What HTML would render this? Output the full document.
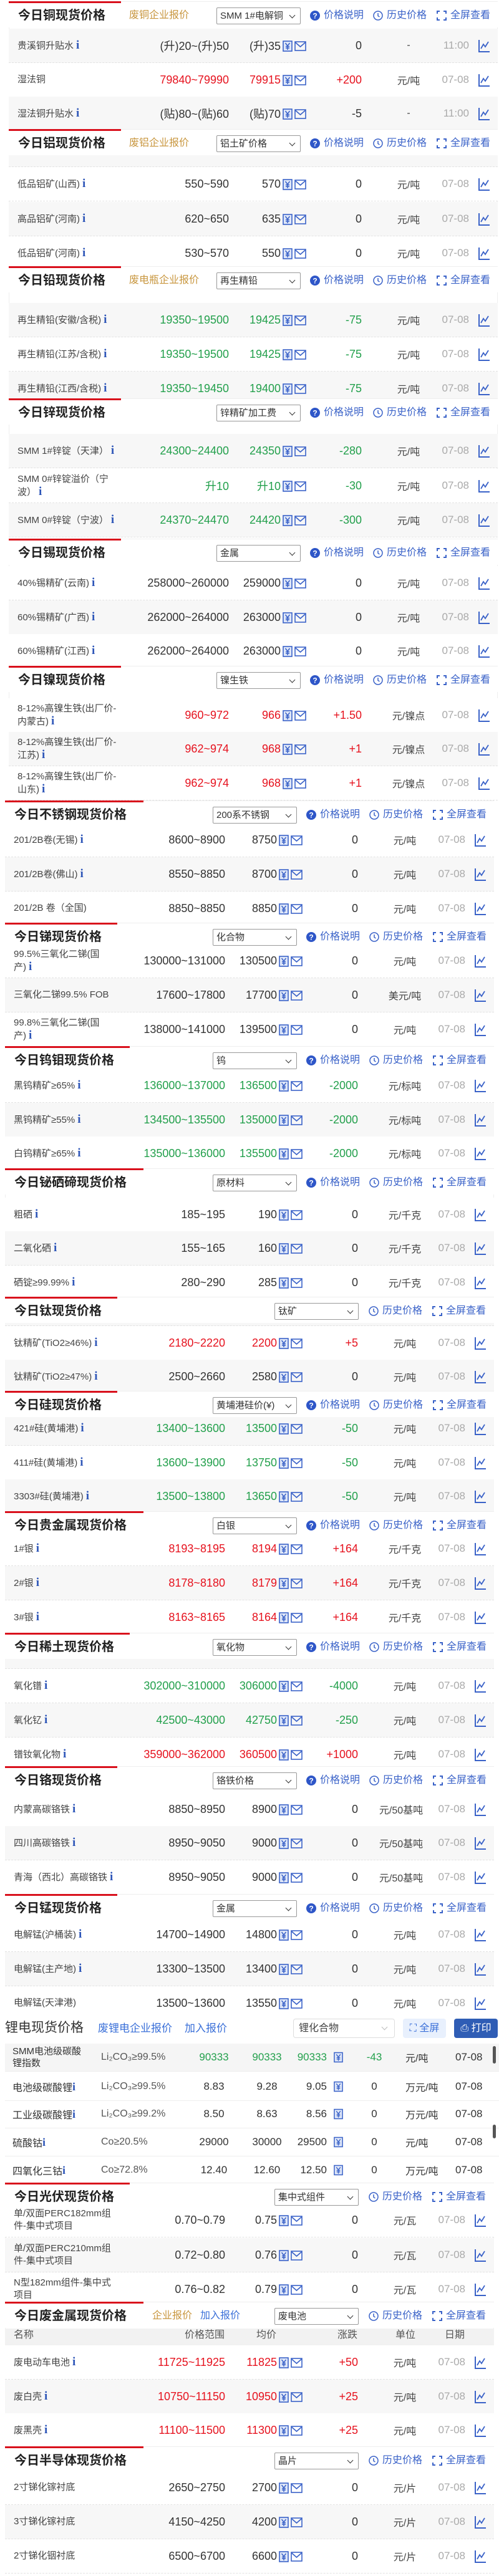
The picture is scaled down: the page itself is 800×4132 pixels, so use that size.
<!DOCTYPE html>
<html><head><meta charset="utf-8">
<style>
*{margin:0;padding:0;box-sizing:border-box}
body{width:800px;height:4132px;position:relative;background:#fff;font-family:"Liberation Sans","Noto Sans CJK SC",sans-serif;color:#333;overflow:hidden}
.sec{position:absolute;left:0;width:798px;overflow:hidden;background:#fff}
.sec.s{left:-6px}
.box{position:absolute;left:14px;right:0;top:0;bottom:4px;border:1px solid #eee;border-top:none}
.bar{position:absolute;left:14px;top:0;width:180px;height:3px;background:#d9101c;z-index:3}
.hd{position:absolute;left:14px;right:0;top:0;height:42px;background:#fff;z-index:2;border-top:1px solid #eee}
.tt{position:absolute;left:29px;top:10px;font-size:20px;font-weight:bold;line-height:26px;color:#222;z-index:3}
.sub{position:absolute;top:13px;font-size:16px;line-height:20px;color:#c8963e;z-index:3}
.sub.b{color:#3a6fd8}
.sel{position:absolute;left:347px;top:10px;width:135px;height:27px;border:1px solid #999;border-radius:2px;font-size:15px;line-height:25px;padding-left:5px;z-index:3;background:#fff;white-space:nowrap;overflow:hidden}
.sel:after{content:"";position:absolute;right:9px;top:8px;width:6px;height:6px;border-right:1.5px solid #333;border-bottom:1.5px solid #333;transform:rotate(45deg)}
.lk{position:absolute;top:13px;font-size:16px;line-height:20px;color:#3a62c8;z-index:3;white-space:nowrap}
.lk svg{position:absolute;left:-22px;top:2px}
.row{position:absolute;left:14px;right:0;height:55px;border-bottom:1px dashed #e2e2e2;background:#fff}
.row.g{background:#f7f7f7}
.row>div{position:absolute;top:0;height:54px;display:flex;align-items:center}
.n{left:14px;width:165px;font-size:15px;line-height:20px;color:#444;display:block!important;padding-top:0}
.n{display:flex!important;align-items:center}
.n span{display:block}
.n i{font-family:"Liberation Serif",serif;font-weight:bold;font-style:normal;color:#2e56b8;font-size:19px;margin-left:4px}
.r{left:186px;width:167px;justify-content:flex-end;font-size:18px}
.a{left:356px;width:80px;justify-content:flex-end;font-size:18px}
.c{left:486px;width:80px;justify-content:flex-end;font-size:18px}
.u{left:596px;width:90px;justify-content:center;font-size:16px;color:#444}
.d{left:686px;width:52px;justify-content:flex-end;font-size:17px;color:#aaa}
.row svg{position:absolute}
.yi{left:439px;top:19px}.ml{left:458px;top:19px}.ch{left:752px;top:17px}
.rd{color:#e6121e}.gr{color:#23a04c}
.li{position:absolute;left:0;top:3230px;width:800px;height:271px;overflow:hidden;background:#fff}
.lr{position:absolute;left:8px;right:0;height:45px;border-bottom:1px solid #eee}
.lr>div{position:absolute;top:0;height:44px;display:flex;align-items:center}
</style></head><body>
<svg width="0" height="0" style="position:absolute">
<defs>
<symbol id="yen" viewBox="0 0 16 18"><rect x="1" y="1" width="14" height="16" fill="#dfe7f8" stroke="#3a62c8" stroke-width="1.6"/><path d="M4.5 4 8 8.5 11.5 4M8 8.5V15M5 9.5h6M5 12h6" stroke="#3a62c8" stroke-width="1.5" fill="none"/></symbol>
<symbol id="env" viewBox="0 0 19 18"><rect x="1" y="2" width="17" height="14" fill="none" stroke="#3a62c8" stroke-width="1.6"/><path d="M1.5 3 9.5 10 17.5 3" fill="none" stroke="#3a62c8" stroke-width="1.6"/></symbol>
<symbol id="cht" viewBox="0 0 20 22"><path d="M2 1V20H19" fill="none" stroke="#3a62c8" stroke-width="2"/><path d="M5 15 9 8 12 12 17 4" fill="none" stroke="#3a62c8" stroke-width="1.8"/></symbol>
<symbol id="hlp" viewBox="0 0 16 16"><circle cx="8" cy="8" r="8" fill="#2e56c8"/><text x="8" y="12.5" font-size="12" font-weight="bold" text-anchor="middle" fill="#fff" font-family="Liberation Sans">?</text></symbol>
<symbol id="clk" viewBox="0 0 16 16"><circle cx="8" cy="8" r="7" fill="none" stroke="#3a62c8" stroke-width="1.5"/><path d="M8 4V8.5L10.5 10" fill="none" stroke="#3a62c8" stroke-width="1.5"/></symbol>
<symbol id="ful" viewBox="0 0 16 16"><path d="M1 5V1H5M11 1H15V5M15 11V15H11M5 15H1V11" fill="none" stroke="#3a62c8" stroke-width="2"/></symbol>
</defs></svg>

<!-- COPPER -->
<div class="sec" style="top:2px;height:205px"><div class="box"></div><div class="bar"></div><div class="hd"></div>
<div class="tt">今日铜现货价格</div><div class="sub" style="left:207px">废铜企业报价</div>
<div class="sel">SMM 1#电解铜</div>
<div class="lk" style="left:519px"><svg width="16" height="16"><use href="#hlp"/></svg>价格说明</div>
<div class="lk" style="left:620px"><svg width="16" height="16"><use href="#clk"/></svg>历史价格</div>
<div class="lk" style="left:722px"><svg width="16" height="16"><use href="#ful"/></svg>全屏查看</div>
<div class="row g" style="top:44px"><div class="n"><span>贵溪铜升贴水<i>i</i></span></div><div class="r">(升)20~(升)50</div><div class="a">(升)35</div><svg class="yi" width="16" height="18"><use href="#yen"/></svg><svg class="ml" width="19" height="18"><use href="#env"/></svg><div class="c">0</div><div class="u">-</div><div class="d">11:00</div><svg class="ch" width="20" height="22"><use href="#cht"/></svg></div>
<div class="row" style="top:99px"><div class="n"><span>湿法铜</span></div><div class="r rd">79840~79990</div><div class="a rd">79915</div><svg class="yi" width="16" height="18"><use href="#yen"/></svg><svg class="ml" width="19" height="18"><use href="#env"/></svg><div class="c rd">+200</div><div class="u">元/吨</div><div class="d">07-08</div><svg class="ch" width="20" height="22"><use href="#cht"/></svg></div>
<div class="row g" style="top:153px"><div class="n"><span>湿法铜升贴水<i>i</i></span></div><div class="r">(贴)80~(贴)60</div><div class="a">(贴)70</div><svg class="yi" width="16" height="18"><use href="#yen"/></svg><svg class="ml" width="19" height="18"><use href="#env"/></svg><div class="c">-5</div><div class="u">-</div><div class="d">11:00</div><svg class="ch" width="20" height="22"><use href="#cht"/></svg></div>
</div>

<!-- ALUMINIUM -->
<div class="sec" style="top:207px;height:220px"><div class="box"></div><div class="bar"></div><div class="hd"></div>
<div class="tt">今日铝现货价格</div><div class="sub" style="left:207px">废铝企业报价</div>
<div class="sel">铝土矿价格</div>
<div class="lk" style="left:519px"><svg width="16" height="16"><use href="#hlp"/></svg>价格说明</div>
<div class="lk" style="left:620px"><svg width="16" height="16"><use href="#clk"/></svg>历史价格</div>
<div class="lk" style="left:722px"><svg width="16" height="16"><use href="#ful"/></svg>全屏查看</div>
<div class="row g" style="top:6px"></div>
<div class="row" style="top:61px"><div class="n"><span>低品铝矿(山西)<i>i</i></span></div><div class="r">550~590</div><div class="a">570</div><svg class="yi" width="16" height="18"><use href="#yen"/></svg><svg class="ml" width="19" height="18"><use href="#env"/></svg><div class="c">0</div><div class="u">元/吨</div><div class="d">07-08</div><svg class="ch" width="20" height="22"><use href="#cht"/></svg></div>
<div class="row g" style="top:117px"><div class="n"><span>高品铝矿(河南)<i>i</i></span></div><div class="r">620~650</div><div class="a">635</div><svg class="yi" width="16" height="18"><use href="#yen"/></svg><svg class="ml" width="19" height="18"><use href="#env"/></svg><div class="c">0</div><div class="u">元/吨</div><div class="d">07-08</div><svg class="ch" width="20" height="22"><use href="#cht"/></svg></div>
<div class="row" style="top:172px"><div class="n"><span>低品铝矿(河南)<i>i</i></span></div><div class="r">530~570</div><div class="a">550</div><svg class="yi" width="16" height="18"><use href="#yen"/></svg><svg class="ml" width="19" height="18"><use href="#env"/></svg><div class="c">0</div><div class="u">元/吨</div><div class="d">07-08</div><svg class="ch" width="20" height="22"><use href="#cht"/></svg></div>
</div>

<!-- LEAD -->
<div class="sec" style="top:427px;height:212px"><div class="box"></div><div class="bar"></div><div class="hd"></div>
<div class="tt">今日铅现货价格</div><div class="sub" style="left:207px">废电瓶企业报价</div>
<div class="sel">再生精铅</div>
<div class="lk" style="left:519px"><svg width="16" height="16"><use href="#hlp"/></svg>价格说明</div>
<div class="lk" style="left:620px"><svg width="16" height="16"><use href="#clk"/></svg>历史价格</div>
<div class="lk" style="left:722px"><svg width="16" height="16"><use href="#ful"/></svg>全屏查看</div>
<div class="row g" style="top:59px"><div class="n"><span>再生精铅(安徽/含税)<i>i</i></span></div><div class="r gr">19350~19500</div><div class="a gr">19425</div><svg class="yi" width="16" height="18"><use href="#yen"/></svg><svg class="ml" width="19" height="18"><use href="#env"/></svg><div class="c gr">-75</div><div class="u">元/吨</div><div class="d">07-08</div><svg class="ch" width="20" height="22"><use href="#cht"/></svg></div>
<div class="row" style="top:114px"><div class="n"><span>再生精铅(江苏/含税)<i>i</i></span></div><div class="r gr">19350~19500</div><div class="a gr">19425</div><svg class="yi" width="16" height="18"><use href="#yen"/></svg><svg class="ml" width="19" height="18"><use href="#env"/></svg><div class="c gr">-75</div><div class="u">元/吨</div><div class="d">07-08</div><svg class="ch" width="20" height="22"><use href="#cht"/></svg></div>
<div class="row g" style="top:169px"><div class="n"><span>再生精铅(江西/含税)<i>i</i></span></div><div class="r gr">19350~19450</div><div class="a gr">19400</div><svg class="yi" width="16" height="18"><use href="#yen"/></svg><svg class="ml" width="19" height="18"><use href="#env"/></svg><div class="c gr">-75</div><div class="u">元/吨</div><div class="d">07-08</div><svg class="ch" width="20" height="22"><use href="#cht"/></svg></div>
</div>

<!-- ZINC -->
<div class="sec" style="top:639px;height:225px"><div class="box"></div><div class="bar"></div><div class="hd"></div>
<div class="tt">今日锌现货价格</div>
<div class="sel">锌精矿加工费</div>
<div class="lk" style="left:519px"><svg width="16" height="16"><use href="#hlp"/></svg>价格说明</div>
<div class="lk" style="left:620px"><svg width="16" height="16"><use href="#clk"/></svg>历史价格</div>
<div class="lk" style="left:722px"><svg width="16" height="16"><use href="#ful"/></svg>全屏查看</div>
<div class="row g" style="top:57px"><div class="n"><span>SMM 1#锌锭（天津）<i>i</i></span></div><div class="r gr">24300~24400</div><div class="a gr">24350</div><svg class="yi" width="16" height="18"><use href="#yen"/></svg><svg class="ml" width="19" height="18"><use href="#env"/></svg><div class="c gr">-280</div><div class="u">元/吨</div><div class="d">07-08</div><svg class="ch" width="20" height="22"><use href="#cht"/></svg></div>
<div class="row" style="top:113px"><div class="n"><span>SMM 0#锌锭溢价（宁波）<i>i</i></span></div><div class="r gr">升10</div><div class="a gr">升10</div><svg class="yi" width="16" height="18"><use href="#yen"/></svg><svg class="ml" width="19" height="18"><use href="#env"/></svg><div class="c gr">-30</div><div class="u">元/吨</div><div class="d">07-08</div><svg class="ch" width="20" height="22"><use href="#cht"/></svg></div>
<div class="row g" style="top:168px"><div class="n"><span>SMM 0#锌锭（宁波）<i>i</i></span></div><div class="r gr">24370~24470</div><div class="a gr">24420</div><svg class="yi" width="16" height="18"><use href="#yen"/></svg><svg class="ml" width="19" height="18"><use href="#env"/></svg><div class="c gr">-300</div><div class="u">元/吨</div><div class="d">07-08</div><svg class="ch" width="20" height="22"><use href="#cht"/></svg></div>
</div>

<!-- TIN -->
<div class="sec" style="top:864px;height:204px"><div class="box"></div><div class="bar"></div><div class="hd"></div>
<div class="tt">今日锡现货价格</div>
<div class="sel">金属</div>
<div class="lk" style="left:519px"><svg width="16" height="16"><use href="#hlp"/></svg>价格说明</div>
<div class="lk" style="left:620px"><svg width="16" height="16"><use href="#clk"/></svg>历史价格</div>
<div class="lk" style="left:722px"><svg width="16" height="16"><use href="#ful"/></svg>全屏查看</div>
<div class="row" style="top:44px"><div class="n"><span>40%锡精矿(云南)<i>i</i></span></div><div class="r">258000~260000</div><div class="a">259000</div><svg class="yi" width="16" height="18"><use href="#yen"/></svg><svg class="ml" width="19" height="18"><use href="#env"/></svg><div class="c">0</div><div class="u">元/吨</div><div class="d">07-08</div><svg class="ch" width="20" height="22"><use href="#cht"/></svg></div>
<div class="row g" style="top:99px"><div class="n"><span>60%锡精矿(广西)<i>i</i></span></div><div class="r">262000~264000</div><div class="a">263000</div><svg class="yi" width="16" height="18"><use href="#yen"/></svg><svg class="ml" width="19" height="18"><use href="#env"/></svg><div class="c">0</div><div class="u">元/吨</div><div class="d">07-08</div><svg class="ch" width="20" height="22"><use href="#cht"/></svg></div>
<div class="row" style="top:153px"><div class="n"><span>60%锡精矿(江西)<i>i</i></span></div><div class="r">262000~264000</div><div class="a">263000</div><svg class="yi" width="16" height="18"><use href="#yen"/></svg><svg class="ml" width="19" height="18"><use href="#env"/></svg><div class="c">0</div><div class="u">元/吨</div><div class="d">07-08</div><svg class="ch" width="20" height="22"><use href="#cht"/></svg></div>
</div>

<!-- NICKEL -->
<div class="sec" style="top:1068px;height:216px"><div class="box"></div><div class="bar"></div><div class="hd"></div>
<div class="tt">今日镍现货价格</div>
<div class="sel">镍生铁</div>
<div class="lk" style="left:519px"><svg width="16" height="16"><use href="#hlp"/></svg>价格说明</div>
<div class="lk" style="left:620px"><svg width="16" height="16"><use href="#clk"/></svg>历史价格</div>
<div class="lk" style="left:722px"><svg width="16" height="16"><use href="#ful"/></svg>全屏查看</div>
<div class="row" style="top:52px"><div class="n"><span>8-12%高镍生铁(出厂价-内蒙古)<i>i</i></span></div><div class="r rd">960~972</div><div class="a rd">966</div><svg class="yi" width="16" height="18"><use href="#yen"/></svg><svg class="ml" width="19" height="18"><use href="#env"/></svg><div class="c rd">+1.50</div><div class="u">元/镍点</div><div class="d">07-08</div><svg class="ch" width="20" height="22"><use href="#cht"/></svg></div>
<div class="row g" style="top:106px"><div class="n"><span>8-12%高镍生铁(出厂价-江苏)<i>i</i></span></div><div class="r rd">962~974</div><div class="a rd">968</div><svg class="yi" width="16" height="18"><use href="#yen"/></svg><svg class="ml" width="19" height="18"><use href="#env"/></svg><div class="c rd">+1</div><div class="u">元/镍点</div><div class="d">07-08</div><svg class="ch" width="20" height="22"><use href="#cht"/></svg></div>
<div class="row" style="top:161px"><div class="n"><span>8-12%高镍生铁(出厂价-山东)<i>i</i></span></div><div class="r rd">962~974</div><div class="a rd">968</div><svg class="yi" width="16" height="18"><use href="#yen"/></svg><svg class="ml" width="19" height="18"><use href="#env"/></svg><div class="c rd">+1</div><div class="u">元/镍点</div><div class="d">07-08</div><svg class="ch" width="20" height="22"><use href="#cht"/></svg></div>
</div>

<!-- STAINLESS -->
<div class="sec s" style="top:1284px;height:196px"><div class="box"></div><div class="bar" style="width:222px"></div><div class="hd"></div>
<div class="tt">今日不锈钢现货价格</div>
<div class="sel">200系不锈钢</div>
<div class="lk" style="left:519px"><svg width="16" height="16"><use href="#hlp"/></svg>价格说明</div>
<div class="lk" style="left:620px"><svg width="16" height="16"><use href="#clk"/></svg>历史价格</div>
<div class="lk" style="left:722px"><svg width="16" height="16"><use href="#ful"/></svg>全屏查看</div>
<div class="row" style="top:36px"><div class="n"><span>201/2B卷(无锡)<i>i</i></span></div><div class="r">8600~8900</div><div class="a">8750</div><svg class="yi" width="16" height="18"><use href="#yen"/></svg><svg class="ml" width="19" height="18"><use href="#env"/></svg><div class="c">0</div><div class="u">元/吨</div><div class="d">07-08</div><svg class="ch" width="20" height="22"><use href="#cht"/></svg></div>
<div class="row g" style="top:91px"><div class="n"><span>201/2B卷(佛山)<i>i</i></span></div><div class="r">8550~8850</div><div class="a">8700</div><svg class="yi" width="16" height="18"><use href="#yen"/></svg><svg class="ml" width="19" height="18"><use href="#env"/></svg><div class="c">0</div><div class="u">元/吨</div><div class="d">07-08</div><svg class="ch" width="20" height="22"><use href="#cht"/></svg></div>
<div class="row" style="top:146px"><div class="n"><span>201/2B 卷（全国)</span></div><div class="r">8850~8850</div><div class="a">8850</div><svg class="yi" width="16" height="18"><use href="#yen"/></svg><svg class="ml" width="19" height="18"><use href="#env"/></svg><div class="c">0</div><div class="u">元/吨</div><div class="d">07-08</div><svg class="ch" width="20" height="22"><use href="#cht"/></svg></div>
</div>

<!-- ANTIMONY -->
<div class="sec s" style="top:1480px;height:198px"><div class="box"></div><div class="bar"></div><div class="hd"></div>
<div class="tt">今日锑现货价格</div>
<div class="sel">化合物</div>
<div class="lk" style="left:519px"><svg width="16" height="16"><use href="#hlp"/></svg>价格说明</div>
<div class="lk" style="left:620px"><svg width="16" height="16"><use href="#clk"/></svg>历史价格</div>
<div class="lk" style="left:722px"><svg width="16" height="16"><use href="#ful"/></svg>全屏查看</div>
<div class="row" style="top:34px"><div class="n"><span>99.5%三氧化二锑(国产)<i>i</i></span></div><div class="r">130000~131000</div><div class="a">130500</div><svg class="yi" width="16" height="18"><use href="#yen"/></svg><svg class="ml" width="19" height="18"><use href="#env"/></svg><div class="c">0</div><div class="u">元/吨</div><div class="d">07-08</div><svg class="ch" width="20" height="22"><use href="#cht"/></svg></div>
<div class="row g" style="top:89px"><div class="n"><span>三氧化二锑99.5% FOB</span></div><div class="r">17600~17800</div><div class="a">17700</div><svg class="yi" width="16" height="18"><use href="#yen"/></svg><svg class="ml" width="19" height="18"><use href="#env"/></svg><div class="c">0</div><div class="u">美元/吨</div><div class="d">07-08</div><svg class="ch" width="20" height="22"><use href="#cht"/></svg></div>
<div class="row" style="top:144px"><div class="n"><span>99.8%三氧化二锑(国产)<i>i</i></span></div><div class="r">138000~141000</div><div class="a">139500</div><svg class="yi" width="16" height="18"><use href="#yen"/></svg><svg class="ml" width="19" height="18"><use href="#env"/></svg><div class="c">0</div><div class="u">元/吨</div><div class="d">07-08</div><svg class="ch" width="20" height="22"><use href="#cht"/></svg></div>
</div>

<!-- TUNGSTEN -->
<div class="sec s" style="top:1678px;height:196px"><div class="box"></div><div class="bar" style="width:200px"></div><div class="hd"></div>
<div class="tt">今日钨钼现货价格</div>
<div class="sel">钨</div>
<div class="lk" style="left:519px"><svg width="16" height="16"><use href="#hlp"/></svg>价格说明</div>
<div class="lk" style="left:620px"><svg width="16" height="16"><use href="#clk"/></svg>历史价格</div>
<div class="lk" style="left:722px"><svg width="16" height="16"><use href="#ful"/></svg>全屏查看</div>
<div class="row" style="top:36px"><div class="n"><span>黑钨精矿≥65%<i>i</i></span></div><div class="r gr">136000~137000</div><div class="a gr">136500</div><svg class="yi" width="16" height="18"><use href="#yen"/></svg><svg class="ml" width="19" height="18"><use href="#env"/></svg><div class="c gr">-2000</div><div class="u">元/标吨</div><div class="d">07-08</div><svg class="ch" width="20" height="22"><use href="#cht"/></svg></div>
<div class="row g" style="top:91px"><div class="n"><span>黑钨精矿≥55%<i>i</i></span></div><div class="r gr">134500~135500</div><div class="a gr">135000</div><svg class="yi" width="16" height="18"><use href="#yen"/></svg><svg class="ml" width="19" height="18"><use href="#env"/></svg><div class="c gr">-2000</div><div class="u">元/标吨</div><div class="d">07-08</div><svg class="ch" width="20" height="22"><use href="#cht"/></svg></div>
<div class="row" style="top:145px"><div class="n"><span>白钨精矿≥65%<i>i</i></span></div><div class="r gr">135000~136000</div><div class="a gr">135500</div><svg class="yi" width="16" height="18"><use href="#yen"/></svg><svg class="ml" width="19" height="18"><use href="#env"/></svg><div class="c gr">-2000</div><div class="u">元/标吨</div><div class="d">07-08</div><svg class="ch" width="20" height="22"><use href="#cht"/></svg></div>
</div>

<!-- BISMUTH/SE/TE -->
<div class="sec s" style="top:1874px;height:206px"><div class="box"></div><div class="bar" style="width:222px"></div><div class="hd"></div>
<div class="tt">今日铋硒碲现货价格</div>
<div class="sel">原材料</div>
<div class="lk" style="left:519px"><svg width="16" height="16"><use href="#hlp"/></svg>价格说明</div>
<div class="lk" style="left:620px"><svg width="16" height="16"><use href="#clk"/></svg>历史价格</div>
<div class="lk" style="left:722px"><svg width="16" height="16"><use href="#ful"/></svg>全屏查看</div>
<div class="row" style="top:47px"><div class="n"><span>粗硒<i>i</i></span></div><div class="r">185~195</div><div class="a">190</div><svg class="yi" width="16" height="18"><use href="#yen"/></svg><svg class="ml" width="19" height="18"><use href="#env"/></svg><div class="c">0</div><div class="u">元/千克</div><div class="d">07-08</div><svg class="ch" width="20" height="22"><use href="#cht"/></svg></div>
<div class="row g" style="top:101px"><div class="n"><span>二氧化硒<i>i</i></span></div><div class="r">155~165</div><div class="a">160</div><svg class="yi" width="16" height="18"><use href="#yen"/></svg><svg class="ml" width="19" height="18"><use href="#env"/></svg><div class="c">0</div><div class="u">元/千克</div><div class="d">07-08</div><svg class="ch" width="20" height="22"><use href="#cht"/></svg></div>
<div class="row" style="top:156px"><div class="n"><span>硒锭≥99.99%<i>i</i></span></div><div class="r">280~290</div><div class="a">285</div><svg class="yi" width="16" height="18"><use href="#yen"/></svg><svg class="ml" width="19" height="18"><use href="#env"/></svg><div class="c">0</div><div class="u">元/千克</div><div class="d">07-08</div><svg class="ch" width="20" height="22"><use href="#cht"/></svg></div>
</div>

<!-- TITANIUM -->
<div class="sec s" style="top:2080px;height:151px"><div class="box"></div><div class="bar"></div><div class="hd"></div>
<div class="tt">今日钛现货价格</div>
<div class="sel" style="left:446px">钛矿</div>
<div class="lk" style="left:619px"><svg width="16" height="16"><use href="#clk"/></svg>历史价格</div>
<div class="lk" style="left:721px"><svg width="16" height="16"><use href="#ful"/></svg>全屏查看</div>
<div class="row g" style="top:-8px"></div>
<div class="row" style="top:47px"><div class="n"><span>钛精矿(TiO2≥46%)<i>i</i></span></div><div class="r rd">2180~2220</div><div class="a rd">2200</div><svg class="yi" width="16" height="18"><use href="#yen"/></svg><svg class="ml" width="19" height="18"><use href="#env"/></svg><div class="c rd">+5</div><div class="u">元/吨</div><div class="d">07-08</div><svg class="ch" width="20" height="22"><use href="#cht"/></svg></div>
<div class="row g" style="top:101px"><div class="n"><span>钛精矿(TiO2≥47%)<i>i</i></span></div><div class="r">2500~2660</div><div class="a">2580</div><svg class="yi" width="16" height="18"><use href="#yen"/></svg><svg class="ml" width="19" height="18"><use href="#env"/></svg><div class="c">0</div><div class="u">元/吨</div><div class="d">07-08</div><svg class="ch" width="20" height="22"><use href="#cht"/></svg></div>
</div>

<!-- SILICON -->
<div class="sec s" style="top:2231px;height:193px"><div class="box"></div><div class="bar"></div><div class="hd"></div>
<div class="tt">今日硅现货价格</div>
<div class="sel">黄埔港硅价(¥)</div>
<div class="lk" style="left:519px"><svg width="16" height="16"><use href="#hlp"/></svg>价格说明</div>
<div class="lk" style="left:620px"><svg width="16" height="16"><use href="#clk"/></svg>历史价格</div>
<div class="lk" style="left:722px"><svg width="16" height="16"><use href="#ful"/></svg>全屏查看</div>
<div class="row g" style="top:33px"><div class="n"><span>421#硅(黄埔港)<i>i</i></span></div><div class="r gr">13400~13600</div><div class="a gr">13500</div><svg class="yi" width="16" height="18"><use href="#yen"/></svg><svg class="ml" width="19" height="18"><use href="#env"/></svg><div class="c gr">-50</div><div class="u">元/吨</div><div class="d">07-08</div><svg class="ch" width="20" height="22"><use href="#cht"/></svg></div>
<div class="row" style="top:88px"><div class="n"><span>411#硅(黄埔港)<i>i</i></span></div><div class="r gr">13600~13900</div><div class="a gr">13750</div><svg class="yi" width="16" height="18"><use href="#yen"/></svg><svg class="ml" width="19" height="18"><use href="#env"/></svg><div class="c gr">-50</div><div class="u">元/吨</div><div class="d">07-08</div><svg class="ch" width="20" height="22"><use href="#cht"/></svg></div>
<div class="row g" style="top:142px"><div class="n"><span>3303#硅(黄埔港)<i>i</i></span></div><div class="r gr">13500~13800</div><div class="a gr">13650</div><svg class="yi" width="16" height="18"><use href="#yen"/></svg><svg class="ml" width="19" height="18"><use href="#env"/></svg><div class="c gr">-50</div><div class="u">元/吨</div><div class="d">07-08</div><svg class="ch" width="20" height="22"><use href="#cht"/></svg></div>
</div>

<!-- PRECIOUS -->
<div class="sec s" style="top:2424px;height:195px"><div class="box"></div><div class="bar" style="width:222px"></div><div class="hd"></div>
<div class="tt">今日贵金属现货价格</div>
<div class="sel">白银</div>
<div class="lk" style="left:519px"><svg width="16" height="16"><use href="#hlp"/></svg>价格说明</div>
<div class="lk" style="left:620px"><svg width="16" height="16"><use href="#clk"/></svg>历史价格</div>
<div class="lk" style="left:722px"><svg width="16" height="16"><use href="#ful"/></svg>全屏查看</div>
<div class="row" style="top:33px"><div class="n"><span>1#银<i>i</i></span></div><div class="r rd">8193~8195</div><div class="a rd">8194</div><svg class="yi" width="16" height="18"><use href="#yen"/></svg><svg class="ml" width="19" height="18"><use href="#env"/></svg><div class="c rd">+164</div><div class="u">元/千克</div><div class="d">07-08</div><svg class="ch" width="20" height="22"><use href="#cht"/></svg></div>
<div class="row g" style="top:88px"><div class="n"><span>2#银<i>i</i></span></div><div class="r rd">8178~8180</div><div class="a rd">8179</div><svg class="yi" width="16" height="18"><use href="#yen"/></svg><svg class="ml" width="19" height="18"><use href="#env"/></svg><div class="c rd">+164</div><div class="u">元/千克</div><div class="d">07-08</div><svg class="ch" width="20" height="22"><use href="#cht"/></svg></div>
<div class="row" style="top:143px"><div class="n"><span>3#银<i>i</i></span></div><div class="r rd">8163~8165</div><div class="a rd">8164</div><svg class="yi" width="16" height="18"><use href="#yen"/></svg><svg class="ml" width="19" height="18"><use href="#env"/></svg><div class="c rd">+164</div><div class="u">元/千克</div><div class="d">07-08</div><svg class="ch" width="20" height="22"><use href="#cht"/></svg></div>
</div>

<!-- RARE EARTH -->
<div class="sec s" style="top:2619px;height:214px"><div class="box"></div><div class="bar" style="width:200px"></div><div class="hd"></div>
<div class="tt">今日稀土现货价格</div>
<div class="sel">氧化物</div>
<div class="lk" style="left:519px"><svg width="16" height="16"><use href="#hlp"/></svg>价格说明</div>
<div class="lk" style="left:620px"><svg width="16" height="16"><use href="#clk"/></svg>历史价格</div>
<div class="lk" style="left:722px"><svg width="16" height="16"><use href="#ful"/></svg>全屏查看</div>
<div class="row g" style="top:3px"></div>
<div class="row" style="top:58px"><div class="n"><span>氧化镨<i>i</i></span></div><div class="r gr">302000~310000</div><div class="a gr">306000</div><svg class="yi" width="16" height="18"><use href="#yen"/></svg><svg class="ml" width="19" height="18"><use href="#env"/></svg><div class="c gr">-4000</div><div class="u">元/吨</div><div class="d">07-08</div><svg class="ch" width="20" height="22"><use href="#cht"/></svg></div>
<div class="row g" style="top:113px"><div class="n"><span>氧化钇<i>i</i></span></div><div class="r gr">42500~43000</div><div class="a gr">42750</div><svg class="yi" width="16" height="18"><use href="#yen"/></svg><svg class="ml" width="19" height="18"><use href="#env"/></svg><div class="c gr">-250</div><div class="u">元/吨</div><div class="d">07-08</div><svg class="ch" width="20" height="22"><use href="#cht"/></svg></div>
<div class="row" style="top:168px"><div class="n"><span>镨钕氧化物<i>i</i></span></div><div class="r rd">359000~362000</div><div class="a rd">360500</div><svg class="yi" width="16" height="18"><use href="#yen"/></svg><svg class="ml" width="19" height="18"><use href="#env"/></svg><div class="c rd">+1000</div><div class="u">元/吨</div><div class="d">07-08</div><svg class="ch" width="20" height="22"><use href="#cht"/></svg></div>
</div>

<!-- CHROME -->
<div class="sec s" style="top:2833px;height:205px"><div class="box"></div><div class="bar"></div><div class="hd"></div>
<div class="tt">今日铬现货价格</div>
<div class="sel">铬铁价格</div>
<div class="lk" style="left:519px"><svg width="16" height="16"><use href="#hlp"/></svg>价格说明</div>
<div class="lk" style="left:620px"><svg width="16" height="16"><use href="#clk"/></svg>历史价格</div>
<div class="lk" style="left:722px"><svg width="16" height="16"><use href="#ful"/></svg>全屏查看</div>
<div class="row" style="top:42px"><div class="n"><span>内蒙高碳铬铁<i>i</i></span></div><div class="r">8850~8950</div><div class="a">8900</div><svg class="yi" width="16" height="18"><use href="#yen"/></svg><svg class="ml" width="19" height="18"><use href="#env"/></svg><div class="c">0</div><div class="u" style="left:590px">元/50基吨</div><div class="d">07-08</div><svg class="ch" width="20" height="22"><use href="#cht"/></svg></div>
<div class="row g" style="top:96px"><div class="n"><span>四川高碳铬铁<i>i</i></span></div><div class="r">8950~9050</div><div class="a">9000</div><svg class="yi" width="16" height="18"><use href="#yen"/></svg><svg class="ml" width="19" height="18"><use href="#env"/></svg><div class="c">0</div><div class="u" style="left:590px">元/50基吨</div><div class="d">07-08</div><svg class="ch" width="20" height="22"><use href="#cht"/></svg></div>
<div class="row" style="top:151px"><div class="n"><span>青海（西北）高碳铬铁<i>i</i></span></div><div class="r">8950~9050</div><div class="a">9000</div><svg class="yi" width="16" height="18"><use href="#yen"/></svg><svg class="ml" width="19" height="18"><use href="#env"/></svg><div class="c">0</div><div class="u" style="left:590px">元/50基吨</div><div class="d">07-08</div><svg class="ch" width="20" height="22"><use href="#cht"/></svg></div>
</div>

<!-- MANGANESE -->
<div class="sec s" style="top:3038px;height:192px"><div class="box"></div><div class="bar"></div><div class="hd"></div>
<div class="tt">今日锰现货价格</div>
<div class="sel">金属</div>
<div class="lk" style="left:519px"><svg width="16" height="16"><use href="#hlp"/></svg>价格说明</div>
<div class="lk" style="left:620px"><svg width="16" height="16"><use href="#clk"/></svg>历史价格</div>
<div class="lk" style="left:722px"><svg width="16" height="16"><use href="#ful"/></svg>全屏查看</div>
<div class="row" style="top:38px"><div class="n"><span>电解锰(沪桶装)<i>i</i></span></div><div class="r">14700~14900</div><div class="a">14800</div><svg class="yi" width="16" height="18"><use href="#yen"/></svg><svg class="ml" width="19" height="18"><use href="#env"/></svg><div class="c">0</div><div class="u">元/吨</div><div class="d">07-08</div><svg class="ch" width="20" height="22"><use href="#cht"/></svg></div>
<div class="row g" style="top:93px"><div class="n"><span>电解锰(主产地)<i>i</i></span></div><div class="r">13300~13500</div><div class="a">13400</div><svg class="yi" width="16" height="18"><use href="#yen"/></svg><svg class="ml" width="19" height="18"><use href="#env"/></svg><div class="c">0</div><div class="u">元/吨</div><div class="d">07-08</div><svg class="ch" width="20" height="22"><use href="#cht"/></svg></div>
<div class="row" style="top:148px"><div class="n"><span>电解锰(天津港)</span></div><div class="r">13500~13600</div><div class="a">13550</div><svg class="yi" width="16" height="18"><use href="#yen"/></svg><svg class="ml" width="19" height="18"><use href="#env"/></svg><div class="c">0</div><div class="u">元/吨</div><div class="d">07-08</div><svg class="ch" width="20" height="22"><use href="#cht"/></svg></div>
</div>

<!-- LITHIUM -->
<div class="li">
<div style="position:absolute;left:8px;top:9px;font-size:21px;line-height:28px;color:#333">锂电现货价格</div>
<div style="position:absolute;left:157px;top:13px;font-size:17px;line-height:22px;color:#3a6fd8">废锂电企业报价</div>
<div style="position:absolute;left:296px;top:13px;font-size:17px;line-height:22px;color:#3a6fd8">加入报价</div>
<div style="position:absolute;left:470px;top:8px;width:163px;height:31px;border:1px solid #ddd;border-radius:4px;font-size:16px;line-height:29px;padding-left:8px;color:#444">锂化合物<span style="position:absolute;right:12px;top:9px;width:7px;height:7px;border-right:1px solid #bbb;border-bottom:1px solid #bbb;transform:rotate(45deg)"></span></div>
<div style="position:absolute;left:646px;top:8px;width:69px;height:31px;border-radius:4px;background:#e8f0fd;color:#3a6fd8;font-size:16px;line-height:31px;text-align:center">⛶ 全屏</div>
<div style="position:absolute;left:728px;top:8px;width:70px;height:31px;border-radius:4px;background:#2f5db5;color:#fff;font-size:16px;line-height:31px;text-align:center">⎙ 打印</div>
<div class="lr" style="top:48px;background:#f5f5f5"><div style="left:12px;width:118px;font-size:15px;line-height:19px">SMM电池级碳酸锂指数</div><div style="left:154px;font-size:16px;color:#555">Li₂CO₃≥99.5%</div><div class="gr" style="left:290px;width:90px;justify-content:center;font-size:17px">90333</div><div class="gr" style="left:375px;width:90px;justify-content:center;font-size:17px">90333</div><div class="gr" style="left:420px;width:96px;justify-content:flex-end;font-size:17px">90333</div><svg style="position:absolute;left:527px;top:13px" width="15" height="18"><use href="#yen"/></svg><div class="gr" style="left:560px;width:64px;justify-content:center;font-size:17px">-43</div><div style="left:642px;font-size:16px">元/吨</div><div style="left:722px;font-size:17px">07-08</div></div>
<div class="lr" style="top:95px"><div style="left:12px;width:125px;font-size:16px">电池级碳酸锂<i style="font-family:'Liberation Serif',serif;font-weight:bold;font-style:normal;color:#2e56b8;font-size:18px">i</i></div><div style="left:154px;font-size:16px;color:#555">Li₂CO₃≥99.5%</div><div style="left:290px;width:90px;justify-content:center;font-size:17px">8.83</div><div style="left:375px;width:90px;justify-content:center;font-size:17px">9.28</div><div style="left:420px;width:96px;justify-content:flex-end;font-size:17px">9.05</div><svg style="position:absolute;left:527px;top:13px" width="15" height="18"><use href="#yen"/></svg><div style="left:560px;width:64px;justify-content:center;font-size:17px">0</div><div style="left:642px;font-size:16px">万元/吨</div><div style="left:722px;font-size:17px">07-08</div></div>
<div class="lr" style="top:139px"><div style="left:12px;width:125px;font-size:16px">工业级碳酸锂<i style="font-family:'Liberation Serif',serif;font-weight:bold;font-style:normal;color:#2e56b8;font-size:18px">i</i></div><div style="left:154px;font-size:16px;color:#555">Li₂CO₃≥99.2%</div><div style="left:290px;width:90px;justify-content:center;font-size:17px">8.50</div><div style="left:375px;width:90px;justify-content:center;font-size:17px">8.63</div><div style="left:420px;width:96px;justify-content:flex-end;font-size:17px">8.56</div><svg style="position:absolute;left:527px;top:13px" width="15" height="18"><use href="#yen"/></svg><div style="left:560px;width:64px;justify-content:center;font-size:17px">0</div><div style="left:642px;font-size:16px">万元/吨</div><div style="left:722px;font-size:17px">07-08</div></div>
<div class="lr" style="top:184px"><div style="left:12px;width:125px;font-size:16px">硫酸钴<i style="font-family:'Liberation Serif',serif;font-weight:bold;font-style:normal;color:#2e56b8;font-size:18px">i</i></div><div style="left:154px;font-size:16px;color:#555">Co≥20.5%</div><div style="left:290px;width:90px;justify-content:center;font-size:17px">29000</div><div style="left:375px;width:90px;justify-content:center;font-size:17px">30000</div><div style="left:420px;width:96px;justify-content:flex-end;font-size:17px">29500</div><svg style="position:absolute;left:527px;top:13px" width="15" height="18"><use href="#yen"/></svg><div style="left:560px;width:64px;justify-content:center;font-size:17px">0</div><div style="left:642px;font-size:16px">元/吨</div><div style="left:722px;font-size:17px">07-08</div></div>
<div class="lr" style="top:229px"><div style="left:12px;width:125px;font-size:16px">四氧化三钴<i style="font-family:'Liberation Serif',serif;font-weight:bold;font-style:normal;color:#2e56b8;font-size:18px">i</i></div><div style="left:154px;font-size:16px;color:#555">Co≥72.8%</div><div style="left:290px;width:90px;justify-content:center;font-size:17px">12.40</div><div style="left:375px;width:90px;justify-content:center;font-size:17px">12.60</div><div style="left:420px;width:96px;justify-content:flex-end;font-size:17px">12.50</div><svg style="position:absolute;left:527px;top:13px" width="15" height="18"><use href="#yen"/></svg><div style="left:560px;width:64px;justify-content:center;font-size:17px">0</div><div style="left:642px;font-size:16px">万元/吨</div><div style="left:722px;font-size:17px">07-08</div></div>
<div style="position:absolute;left:790px;top:52px;width:5px;height:28px;border-radius:3px;background:#555"></div>
<div style="position:absolute;left:790px;top:178px;width:5px;height:22px;border-radius:3px;background:#555"></div>
</div>

<!-- PV -->
<div class="sec s" style="top:3501px;height:191px"><div class="box"></div><div class="bar" style="width:200px"></div><div class="hd"></div>
<div class="tt">今日光伏现货价格</div>
<div class="sel" style="left:446px">集中式组件</div>
<div class="lk" style="left:619px"><svg width="16" height="16"><use href="#clk"/></svg>历史价格</div>
<div class="lk" style="left:721px"><svg width="16" height="16"><use href="#ful"/></svg>全屏查看</div>
<div class="row" style="top:33px"><div class="n"><span>单/双面PERC182mm组件-集中式项目</span></div><div class="r">0.70~0.79</div><div class="a">0.75</div><svg class="yi" width="16" height="18"><use href="#yen"/></svg><svg class="ml" width="19" height="18"><use href="#env"/></svg><div class="c">0</div><div class="u">元/瓦</div><div class="d">07-08</div><svg class="ch" width="20" height="22"><use href="#cht"/></svg></div>
<div class="row g" style="top:89px"><div class="n"><span>单/双面PERC210mm组件-集中式项目</span></div><div class="r">0.72~0.80</div><div class="a">0.76</div><svg class="yi" width="16" height="18"><use href="#yen"/></svg><svg class="ml" width="19" height="18"><use href="#env"/></svg><div class="c">0</div><div class="u">元/瓦</div><div class="d">07-08</div><svg class="ch" width="20" height="22"><use href="#cht"/></svg></div>
<div class="row" style="top:144px"><div class="n"><span>N型182mm组件-集中式项目</span></div><div class="r">0.76~0.82</div><div class="a">0.79</div><svg class="yi" width="16" height="18"><use href="#yen"/></svg><svg class="ml" width="19" height="18"><use href="#env"/></svg><div class="c">0</div><div class="u">元/瓦</div><div class="d">07-08</div><svg class="ch" width="20" height="22"><use href="#cht"/></svg></div>
</div>

<!-- SCRAP -->
<div class="sec s" style="top:3692px;height:232px"><div class="box"></div><div class="bar" style="width:222px"></div><div class="hd"></div>
<div class="tt">今日废金属现货价格</div><div class="sub" style="left:250px">企业报价</div><div class="sub b" style="left:327px">加入报价</div>
<div class="sel" style="left:446px">废电池</div>
<div class="lk" style="left:619px"><svg width="16" height="16"><use href="#clk"/></svg>历史价格</div>
<div class="lk" style="left:721px"><svg width="16" height="16"><use href="#ful"/></svg>全屏查看</div>
<div style="position:absolute;left:14px;right:0;top:43px;height:28px;background:#f2f2f2;font-size:16px;line-height:22px;color:#555">
<span style="position:absolute;left:14px;top:0">名称</span><span style="position:absolute;left:288px;top:0">价格范围</span><span style="position:absolute;left:403px;top:0">均价</span><span style="position:absolute;left:533px;top:0">涨跌</span><span style="position:absolute;left:626px;top:0">单位</span><span style="position:absolute;left:705px;top:0">日期</span></div>
<div class="row" style="top:70px"><div class="n"><span>废电动车电池<i>i</i></span></div><div class="r rd">11725~11925</div><div class="a rd">11825</div><svg class="yi" width="16" height="18"><use href="#yen"/></svg><svg class="ml" width="19" height="18"><use href="#env"/></svg><div class="c rd">+50</div><div class="u">元/吨</div><div class="d">07-08</div><svg class="ch" width="20" height="22"><use href="#cht"/></svg></div>
<div class="row g" style="top:125px"><div class="n"><span>废白壳<i>i</i></span></div><div class="r rd">10750~11150</div><div class="a rd">10950</div><svg class="yi" width="16" height="18"><use href="#yen"/></svg><svg class="ml" width="19" height="18"><use href="#env"/></svg><div class="c rd">+25</div><div class="u">元/吨</div><div class="d">07-08</div><svg class="ch" width="20" height="22"><use href="#cht"/></svg></div>
<div class="row" style="top:179px"><div class="n"><span>废黑壳<i>i</i></span></div><div class="r rd">11100~11500</div><div class="a rd">11300</div><svg class="yi" width="16" height="18"><use href="#yen"/></svg><svg class="ml" width="19" height="18"><use href="#env"/></svg><div class="c rd">+25</div><div class="u">元/吨</div><div class="d">07-08</div><svg class="ch" width="20" height="22"><use href="#cht"/></svg></div>
</div>

<!-- SEMICONDUCTOR -->
<div class="sec s" style="top:3924px;height:208px"><div class="box"></div><div class="bar" style="width:222px"></div><div class="hd"></div>
<div class="tt">今日半导体现货价格</div>
<div class="sel" style="left:446px">晶片</div>
<div class="lk" style="left:619px"><svg width="16" height="16"><use href="#clk"/></svg>历史价格</div>
<div class="lk" style="left:721px"><svg width="16" height="16"><use href="#ful"/></svg>全屏查看</div>
<div class="row" style="top:39px"><div class="n"><span>2寸锑化镓衬底</span></div><div class="r">2650~2750</div><div class="a">2700</div><svg class="yi" width="16" height="18"><use href="#yen"/></svg><svg class="ml" width="19" height="18"><use href="#env"/></svg><div class="c">0</div><div class="u">元/片</div><div class="d">07-08</div><svg class="ch" width="20" height="22"><use href="#cht"/></svg></div>
<div class="row g" style="top:94px"><div class="n"><span>3寸锑化镓衬底</span></div><div class="r">4150~4250</div><div class="a">4200</div><svg class="yi" width="16" height="18"><use href="#yen"/></svg><svg class="ml" width="19" height="18"><use href="#env"/></svg><div class="c">0</div><div class="u">元/片</div><div class="d">07-08</div><svg class="ch" width="20" height="22"><use href="#cht"/></svg></div>
<div class="row" style="top:149px"><div class="n"><span>2寸锑化铟衬底</span></div><div class="r">6500~6700</div><div class="a">6600</div><svg class="yi" width="16" height="18"><use href="#yen"/></svg><svg class="ml" width="19" height="18"><use href="#env"/></svg><div class="c">0</div><div class="u">元/片</div><div class="d">07-08</div><svg class="ch" width="20" height="22"><use href="#cht"/></svg></div>
</div>
</body></html>
